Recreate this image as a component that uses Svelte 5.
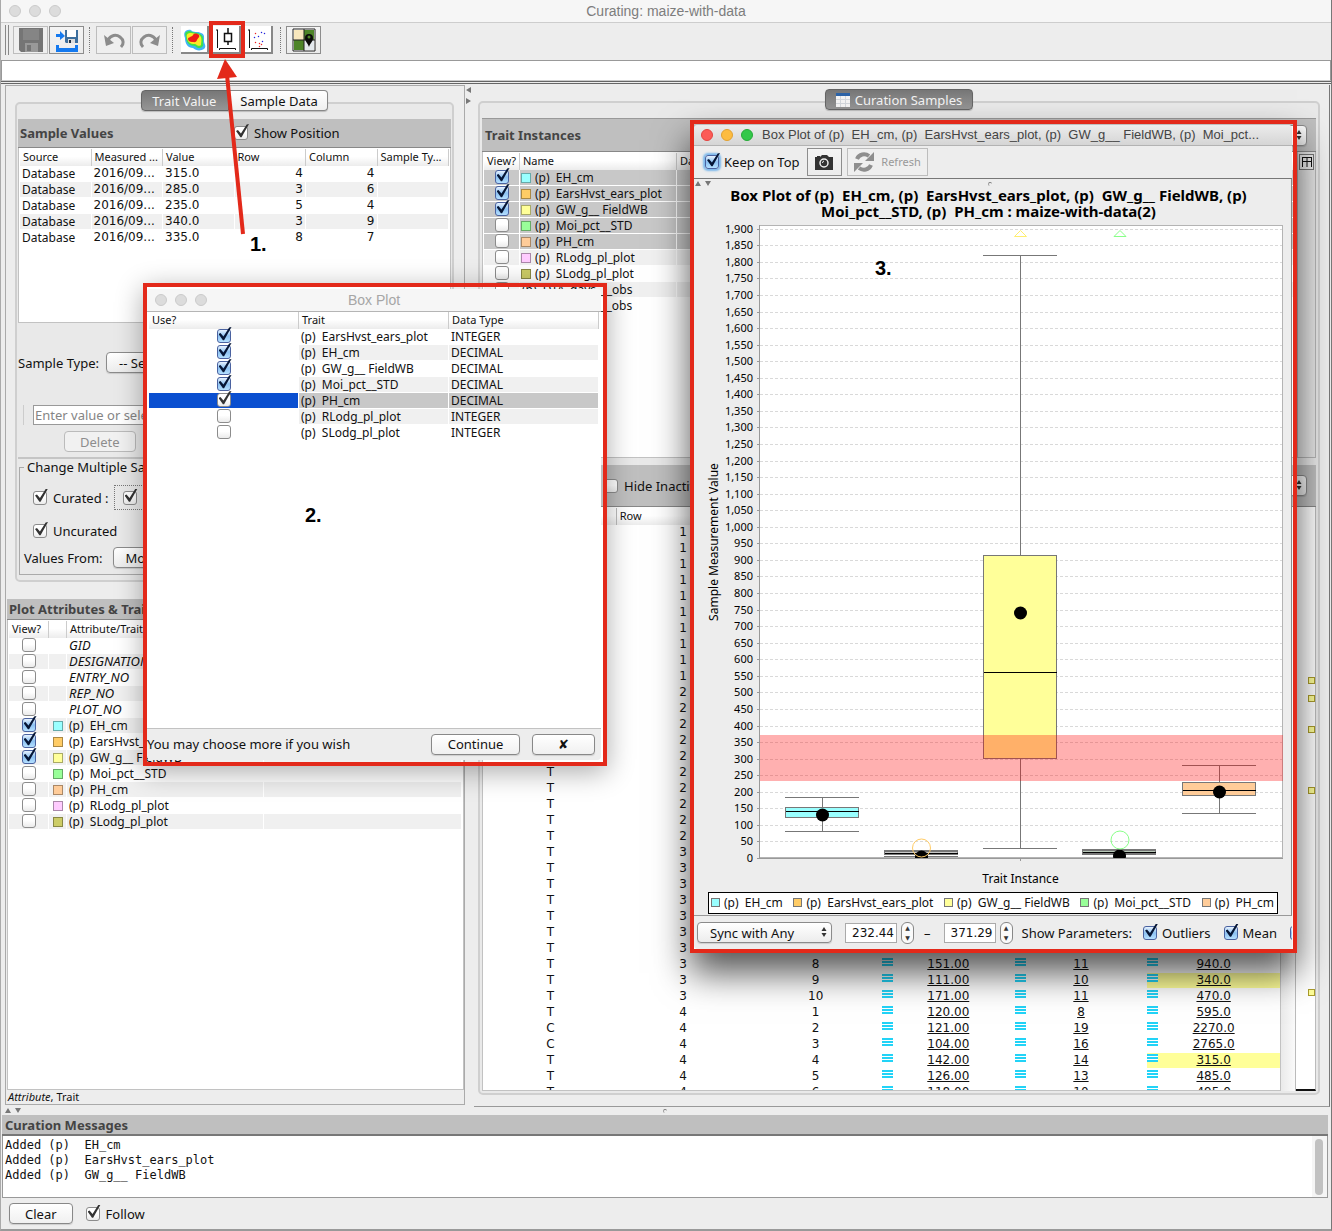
<script>
  const samples = [
    ['315.0', 4, 4],
    ['285.0', 3, 6],
    ['235.0', 5, 4],
    ['340.0', 3, 9],
    ['335.0', 8, 7]
  ];

  const traits = [
    { name: 'EH_cm', color: '#99ffff', on: true },
    { name: 'EarsHvst_ears_plot', color: '#ffcc66', on: true },
    { name: 'GW_g__ FieldWB', color: '#ffff99', on: true },
    { name: 'Moi_pct__STD', color: '#99ff99', on: false },
    { name: 'PH_cm', color: '#ffcc99', on: false },
    { name: 'RLodg_pl_plot', color: '#ffccff', on: false },
    { name: 'SLodg_pl_plot', color: '#cccc66', on: false }
  ];
  const attributes = ['GID', 'DESIGNATION', 'ENTRY_NO', 'REP_NO', 'PLOT_NO'];
  const instances = [...traits, { name: 'DTA_days___obs' }, { name: 'DTS_days___obs' }];

  const choices = [
    ['EarsHvst_ears_plot', 'INTEGER', true],
    ['EH_cm', 'DECIMAL', true],
    ['GW_g__ FieldWB', 'DECIMAL', true],
    ['Moi_pct__STD', 'DECIMAL', true],
    ['PH_cm', 'DECIMAL', true],
    ['RLodg_pl_plot', 'INTEGER', false],
    ['SLodg_pl_plot', 'INTEGER', false]
  ];

  const measured = {
    '3-8': ['T', '151.00', '11', '940.0'],
    '3-9': ['T', '111.00', '10', '340.0'],
    '3-10': ['T', '171.00', '11', '470.0'],
    '4-1': ['T', '120.00', '8', '595.0'],
    '4-2': ['C', '121.00', '19', '2270.0'],
    '4-3': ['C', '104.00', '16', '2765.0'],
    '4-4': ['T', '142.00', '14', '315.0'],
    '4-5': ['T', '126.00', '13', '485.0'],
    '4-6': ['T', '118.00', '10', '495.0']
  };
  const plots = Array.from({ length: 36 }, (_, i) => {
    const row = Math.floor(i / 10) + 1;
    const col = (i % 10) + 1;
    const m = measured[`${row}-${col}`] ?? ['T', '', '', ''];
    return { row, col, kind: m[0], values: m.slice(1) };
  });

  const base = 858;
  const y = (v) => Math.round(base - v * 0.3312);
  const ticks = Array.from({ length: 39 }, (_, i) => i * 50);
  const boxes = [
    { x: 822, lo: 831, hi: 797, q1: 817, q3: 807, med: 811, mean: 815, color: '#99ffff' },
    { x: 921, lo: 856, hi: 850, q1: 854, q3: 851, med: 853, mean: 857, color: '#c8c8c8' },
    { x: 1020, lo: 848, hi: 255, q1: 758, q3: 555, med: 672, mean: 613, color: '#ffff99' },
    { x: 1119, lo: 854, hi: 849, q1: 853, q3: 850, med: 852, mean: 856, color: '#b8c8b8' },
    { x: 1219, lo: 813, hi: 765, q1: 795, q3: 782, med: 790, mean: 792, color: '#ffcc99' }
  ];
  const legend = traits.slice(0, 5);
  const markers = [172, 190, 221, 282, 484];
</script>

{#snippet arrows()}
  <svg class="arrows" viewBox="0 0 8 12" width="8" height="12" aria-hidden="true"><path d="M4 1 6.5 5h-5zM4 11 6.5 7h-5z" /></svg>
{/snippet}

<div class="app">
  <header class="titlebar">
    <span class="lights"><i></i><i></i><i></i></span>
    <h1>Curating: maize-with-data</h1>
  </header>

  <div class="toolbar">
    <span class="grip"></span>
    <div class="group">
      <button class="tool" disabled aria-label="Save">
        <svg width="26" height="26" viewBox="0 0 26 26"><path d="M1 1h24v24H3l-2-2z" fill="#757575" /><path d="M5 2h16v11H5z" fill="#858585" /><path d="M7 16h13v9H7z" fill="#999" /><path d="M9 18h4v6H9z" fill="#757575" /></svg>
      </button>
      <button class="tool dark" aria-label="Save as">
        <svg width="26" height="26" viewBox="0 0 26 26"><path d="M11 3h13v13H12l-1-1z" fill="#3d6f9e" /><path d="M13 3h9v7h-9z" fill="#fff" /><path d="M14 12h7v4h-7z" fill="#ddd" /><path d="M15 13h2v3h-2z" fill="#234" /><path d="M2 7h4V4l5 5-5 4v-3H2zM2 18h3v3h16v-3h3v7H2z" fill="#1479ef" /></svg>
      </button>
    </div>
    <span class="dots"></span>
    <div class="group">
      <button class="tool" disabled aria-label="Undo">
        <svg width="24" height="22" viewBox="0 0 24 22"><path d="M6 11C9 6 14 5 18 8s4 7 1 10" fill="none" stroke="#8c8c8c" stroke-width="3" /><path d="M2 6l2 11 8-3z" fill="#8c8c8c" /></svg>
      </button>
      <button class="tool" disabled aria-label="Redo">
        <svg width="24" height="22" viewBox="0 0 24 22"><path d="M18 11C15 6 10 5 6 8s-4 7-1 10" fill="none" stroke="#8c8c8c" stroke-width="3" /><path d="M22 6l-2 11-8-3z" fill="#8c8c8c" /></svg>
      </button>
    </div>
    <span class="dots roomy"></span>
    <div class="group spaced">
      <button class="tool flat" aria-label="Heat map">
        <svg width="24" height="24" viewBox="0 0 24 24">
          <defs><filter id="soft"><feGaussianBlur stdDeviation="0.6" /></filter></defs>
          <g filter="url(#soft)">
            <path d="M3 11C1 6 3 2 9 3c2 3 7 1 10 3 4 1 3 5 3 8s3 5 0 8c-3 2-8 2-11-1-5 0-8-4-8-10z" fill="#3fb4f5" />
            <path d="M4 10C2 6 4 4 8 4c3 2 7 1 10 3 4 2 3 5 3 8s1 3-1 5-5 1-7-1c-6 0-9-4-9-9z" fill="#3fe04a" />
            <path d="M5 11C4 7 6 6 9 6c4 1 8 0 10 4 1 3 0 6 0 8-2 2-4 0-6-1-5 0-7-2-8-6z" fill="#fbe928" />
            <path d="M6 12c0-2 4-2 5-4s4-2 6 0c1 2-1 3-2 5-1 3-3 2-5 2s-4-1-4-3z" fill="#ee1f14" />
          </g>
        </svg>
      </button>
      <button class="tool flat" aria-label="Box plot">
        <svg width="24" height="24" viewBox="0 0 24 24" fill="none" stroke="#111"><path d="M2 3h2M3.500 3v18M5.500 23v-1.500h16V23" /><path d="M10.500 6.500h7v8h-7zM14 1v6M14 14v4" stroke-width="1.500" /></svg>
      </button>
      <button class="tool flat" aria-label="Scatter plot">
        <svg width="24" height="24" viewBox="0 0 24 24"><path d="M2 3h2M3.500 3v18M5.500 23v-1.500h16V23" fill="none" stroke="#111" /><path d="M9 6h1v1H9zM9 15h1v1H9zM13 19h1v1h-1zM13 16h1v1h-1zM15 17h1v1h-1z" fill="#e22" stroke="#e22" stroke-width=".3" /><path d="M15 5h1v1h-1zM18 6h1v1h-1zM12 9h1v1h-1zM8 10h1v1H8zM16 14h1v1h-1z" fill="#22d" stroke="#22d" stroke-width=".3" /></svg>
      </button>
    </div>
    <span class="dots"></span>
    <button class="tool dark" aria-label="Field map">
      <svg width="24" height="24" viewBox="0 0 24 24"><path d="M1 1h22v22H1z" fill="#fff" stroke="#222" /><path d="M2 2h10v10H2z" fill="#f8e7bd" /><path d="M12 2h10v10H12zM2 12h10v10H2z" fill="#4d8428" /><path d="M12 12h10v10H12z" fill="#e4e9ee" /><path d="M12 1v22M1 12h22" stroke="#222" /><path d="M17 19c-1-4-4-5-4-9a4 4 0 0 1 8 0c0 4-3 5-4 9z" fill="#0a0a0a" /><circle cx="17" cy="9" r="1.500" fill="#4d8428" /></svg>
    </button>
  </div>
  <input class="address" type="text" aria-label="Status" />

  <main>
    <section class="left">
      <div class="tabs">
        <button class="tab active">Trait Value</button><button class="tab">Sample Data</button>
      </div>
      <div class="pane">
        <div class="band first">
          <h2>Sample Values</h2>
          <label class="check"><input type="checkbox" checked />Show Position</label>
        </div>
        <div class="list samples">
          <table class="zebra">
            <thead><tr><th>Source</th><th>Measured ...</th><th>Value</th><th>Row</th><th>Column</th><th>Sample Ty...</th></tr></thead>
            <tbody>
              {#each samples as [value, row, col]}
                <tr><td>Database</td><td class="num">2016/09...</td><td class="num">{value}</td><td class="num end">{row}</td><td class="num end">{col}</td><td></td></tr>
              {/each}
            </tbody>
          </table>
        </div>
        <div class="line type">
          <label for="stype">Sample Type:</label>
          <span class="select"><select id="stype"><option>-- Select --</option></select>{@render arrows()}</span>
        </div>
        <div class="entry"><input type="text" placeholder="Enter value or select" aria-label="Value" /></div>
        <div class="line del"><button class="btn" disabled>Delete</button></div>
        <fieldset>
          <legend>Change Multiple Samples</legend>
          <div class="line curated">
            <label class="check"><input type="checkbox" checked />Curated&nbsp;:</label>
            <span class="dotbox"><input type="checkbox" checked aria-label="Curated values" /></span>
          </div>
          <label class="check uncurated"><input type="checkbox" checked />Uncurated</label>
          <div class="line from">
            <label for="vfrom">Values From:</label>
            <span class="select"><select id="vfrom"><option>Mode</option></select>{@render arrows()}</span>
          </div>
        </fieldset>
      </div>

      <div class="attrs">
        <div class="band slim"><h2>Plot Attributes &amp; Traits</h2></div>
        <div class="list grow">
          <table class="zebra">
            <colgroup><col class="c40" /><col class="c18" /><col class="c197" /><col /></colgroup>
            <thead><tr><th>View?</th><th></th><th>Attribute/Trait</th><th></th></tr></thead>
            <tbody>
              {#each attributes as a}
                <tr><td class="mid"><input type="checkbox" aria-label={a} /></td><td></td><td><em>{a}</em></td><td></td></tr>
              {/each}
              {#each traits as t}
                <tr>
                  <td class="mid"><input class="blue" type="checkbox" checked={t.on} aria-label={t.name} /></td>
                  <td class="mid"><i class="swatch" style:background={t.color}></i></td>
                  <td>(p)&nbsp; {t.name}</td><td></td>
                </tr>
              {/each}
            </tbody>
          </table>
        </div>
        <p class="key"><em>Attribute</em>, Trait</p>
      </div>
    </section>

    <div class="divider">
      <svg width="8" height="22" viewBox="0 0 8 22" aria-hidden="true"><path d="M6 2v6L1 5zM1 13v6l5-3z" fill="#777" /></svg>
    </div>

    <section class="right">
      <div class="tabs">
        <button class="tab active only">
          <svg width="14" height="14" viewBox="0 0 14 14" aria-hidden="true"><path d="M0 0h14v14H0z" fill="#f4f4f4" /><path d="M0 0h14v3H0z" fill="#2d64a8" /><path d="M0 6.500h14M0 10.500h14M4.500 3v11M9.500 3v11" stroke="#d3d7dc" /></svg>
          Curation Samples
        </button>
      </div>
      <div class="pane big">
        <div class="band tall">
          <h2>Trait Instances</h2>
          <span class="select"><select aria-label="Trait order"><option>Any</option></select>{@render arrows()}</span>
        </div>
        <div class="split instances">
          <div class="list">
            <table class="zebra">
              <colgroup><col class="c35" /><col class="c158" /><col /></colgroup>
              <thead><tr><th>View?</th><th>Name</th><th>Data Type</th></tr></thead>
              <tbody>
                {#each instances as t, i}
                  <tr class:sel={i < 5}>
                    <td class="mid"><input class="blue" type="checkbox" checked={t.on} aria-label={t.name} /></td>
                    <td>{#if t.color}<i class="swatch lead" style:background={t.color}></i>{/if}(p)&nbsp; {t.name}</td>
                    <td></td>
                  </tr>
                {/each}
              </tbody>
            </table>
          </div>
          <div class="rail">
            <button aria-label="Choose columns"><svg width="10" height="10" viewBox="0 0 10 10" fill="none" stroke="#111"><path d="M0 .5h10M.5 0v10M5 0v10M9.500 0v10M0 4.500h10" /></svg></button>
          </div>
        </div>
        <div class="band hide">
          <label class="check"><input type="checkbox" />Hide Inactive</label>
          <span class="select"><select aria-label="Plot order"><option>Any</option></select>{@render arrows()}</span>
        </div>
        <div class="split grow">
          <div class="list">
            <table class="plots">
              <thead><tr><th></th><th>Row</th><th>Column</th><th></th><th></th><th></th></tr></thead>
              <tbody>
                {#each plots as p}
                  <tr>
                    <td>{p.kind}</td><td>{p.row}</td><td>{p.col}</td>
                    {#each p.values as v, k}
                      <td class:hot={k === 2 && (v === '340.0' || v === '315.0')}>{#if v}<i class="bars"></i><u>{v}</u>{/if}</td>
                    {/each}
                  </tr>
                {/each}
              </tbody>
            </table>
          </div>
          <div class="scroll"></div>
          <div class="map">
            {#each markers as m}<i style:top="{m - 2}px"></i>{/each}
          </div>
        </div>
      </div>
    </section>
  </main>

  <div class="hsplit">
    <svg width="18" height="7" viewBox="0 0 18 7" aria-hidden="true"><path d="M1 6h6L4 1zM11 1h6l-3 5z" fill="#777" /></svg>
    <span></span>
  </div>

  <section class="messages">
    <div class="band msg"><h2>Curation Messages</h2></div>
    <div class="log">
      <pre>Added (p)  EH_cm
Added (p)  EarsHvst_ears_plot
Added (p)  GW_g__ FieldWB</pre>
      <div class="track"><i></i></div>
    </div>
    <footer>
      <button class="btn">Clear</button>
      <label class="check"><input type="checkbox" checked />Follow</label>
    </footer>
  </section>

  <div class="frame chooser">
    <div class="window">
      <div class="titlebar small">
        <span class="lights"><i></i><i></i><i></i></span>
        <h1>Box Plot</h1>
      </div>
      <div class="body">
        <table class="choices">
          <thead><tr><th>Use?</th><th>Trait</th><th>Data Type</th></tr></thead>
          <tbody>
            {#each choices as [name, kind, on], i}
              <tr class:sel={i === 4}>
                <td class="mid"><input class:blue={i !== 4} type="checkbox" checked={on} aria-label={name} /></td>
                <td>(p)&nbsp; {name}</td><td>{kind}</td>
              </tr>
            {/each}
          </tbody>
        </table>
      </div>
      <div class="foot">
        <span>You may choose more if you wish</span>
        <button class="btn wide">Continue</button>
        <button class="btn close" aria-label="Cancel">✘</button>
      </div>
    </div>
  </div>

  <div class="frame plot">
    <div class="window">
      <div class="titlebar live">
        <span class="lights"><i></i><i></i><i></i></span>
        <h1>Box Plot of (p)&nbsp; EH_cm, (p)&nbsp; EarsHvst_ears_plot, (p)&nbsp; GW_g__ FieldWB, (p)&nbsp; Moi_pct...</h1>
      </div>
      <div class="plotbar">
        <label class="check glow"><input class="blue" type="checkbox" checked />Keep on Top</label>
        <button class="tool dark" aria-label="Snapshot">
          <svg width="18" height="15" viewBox="0 0 18 15"><path d="M0 2h2V1h3v1l2-2h5l2 2h4v13H0z" fill="#333" /><circle cx="9" cy="8" r="4" fill="none" stroke="#eee" stroke-width="1.500" /><path d="M7.500 8A2 2 0 0 1 9 6" stroke="#eee" fill="none" /></svg>
        </button>
        <button class="tool refresh" disabled>
          <svg width="22" height="22" viewBox="0 0 22 22" fill="none" stroke="#8e8e8e" stroke-width="4"><path d="M4 8c2-5 8-6 12-3" /><path d="M18 14c-2 5-8 6-12 3" /><path d="M21 1v9h-9zM1 21v-9h9z" fill="#8e8e8e" stroke="none" /></svg>
          Refresh
        </button>
      </div>
      <div class="chart">
        <div class="mini">
          <svg width="18" height="7" viewBox="0 0 18 7" aria-hidden="true"><path d="M1 6h6L4 1zM11 1h6l-3 5z" fill="#777" /></svg>
          <span></span>
        </div>
        <h3>Box Plot of (p)&nbsp; EH_cm, (p)&nbsp; EarsHvst_ears_plot, (p)&nbsp; GW_g__ FieldWB, (p)<br />Moi_pct__STD, (p)&nbsp; PH_cm : maize-with-data(2)</h3>
        <svg class="graph" viewBox="694 221 597 669" role="img" aria-label="Box plot of sample measurement values by trait instance">
          <defs><clipPath id="area"><rect x="759" y="225" width="524" height="633" /></clipPath></defs>
          <rect x="759.5" y="225.5" width="523" height="632" fill="#fff" stroke="#b4b4b4" />
          {#each ticks as t}
            <path d="M760 {y(t) + 0.5}H1282" stroke="#d9d9d9" stroke-dasharray="3 2" />
            <path d="M757 {y(t) + 0.5}h3" stroke="#999" />
            <text class="tick" x="753" y={y(t) + 4}>{t.toLocaleString('en-US')}</text>
          {/each}
          <path d="M759.5 225v633M757 858.500H1283M1020.500 858v3" stroke="#999" fill="none" />
          <g clip-path="url(#area)">
            {#each boxes as b}
              <g stroke="#777" fill="none">
                <path d="M{b.x + 0.5} {b.hi}V{b.q3}M{b.x + 0.5} {b.q1}V{b.lo}M{b.x - 37} {b.hi + 0.5}h74M{b.x - 37} {b.lo + 0.5}h74" />
                <rect x={b.x - 36.5} y={b.q3 + 0.5} width="73" height={b.q1 - b.q3} fill={b.color} />
                <path d="M{b.x - 36} {b.med + 0.5}h73" stroke="#000" />
              </g>
              <circle cx={b.x + 0.5} cy={b.mean} r="6.500" />
            {/each}
            <circle cx="921.5" cy="848" r="9" fill="none" stroke="#ffcc66" />
            <circle cx="1120" cy="840" r="9" fill="none" stroke="#8f8" />
            <path d="M1014.500 236.500h12l-6-6z" fill="none" stroke="#ffee70" />
            <path d="M1114 236.500h12l-6-6z" fill="none" stroke="#8f8" />
            <rect x="760" y="735" width="523" height="46" fill="#f00" fill-opacity=".31" />
          </g>
          <text class="axis" x="1020.500" y="883">Trait Instance</text>
          <text class="axis" transform="translate(718 542) rotate(-90)">Sample Measurement Value</text>
        </svg>
        <div class="legend">
          {#each legend as t}<span><i style:background={t.color}></i>(p)&nbsp; {t.name}</span>{/each}
        </div>
      </div>
      <div class="params">
        <span class="select sync"><select aria-label="Sync"><option>Sync with Any</option></select>{@render arrows()}</span>
        <input class="field" type="text" value="232.44" aria-label="Lower limit" />
        <span class="spin"><button aria-label="Raise lower limit">▲</button><button aria-label="Reduce lower limit">▼</button></span>
        <span class="dash">–</span>
        <input class="field" type="text" value="371.29" aria-label="Upper limit" />
        <span class="spin"><button aria-label="Raise upper limit">▲</button><button aria-label="Reduce upper limit">▼</button></span>
        <span class="show">Show Parameters:</span>
        <label class="check"><input class="blue" type="checkbox" checked />Outliers</label>
        <label class="check"><input class="blue" type="checkbox" checked />Mean</label>
        <input class="blue" type="checkbox" checked aria-label="Median" />
      </div>
    </div>
  </div>

  <div class="callout"></div>
  <svg class="arrow" width="34" height="178" viewBox="0 0 34 178" aria-hidden="true"><path d="M11 16 27 175" stroke="#e3291a" stroke-width="4" /><path d="M9 0 21 18 1 20z" fill="#e3291a" /></svg>
  <b class="step one">1.</b>
  <b class="step two">2.</b>
  <b class="step three">3.</b>
</div>

<style>
  :global(body) { background: #ededed; }
  .app {
    position: relative;
    box-sizing: border-box;
    height: 100vh;
    min-height: 1000px;
    display: flex;
    flex-direction: column;
    overflow: hidden;
    background: #ededed;
    border-left: 1px solid #aaa;
    border-right: 1px solid #777;
    border-bottom: 2px solid #999;
    font: 13px/16px 'Lucida Grande', 'Noto Sans', sans-serif;
    color: #111;
  }
  .app *, .app *::before, .app *::after { box-sizing: border-box; }
  button, input, select { font: inherit; color: inherit; margin: 0; }
  h1, h2, h3, p, pre { margin: 0; }

  .titlebar {
    flex: none;
    display: grid;
    grid-template-columns: 60px 1fr 60px;
    align-items: center;
    height: 23px;
    background: #f6f6f6;
    border-bottom: 1px solid #cdcdcd;
  }
  .titlebar h1 { font: 14px/18px 'Liberation Sans', sans-serif; color: #7d7d7d; text-align: center; white-space: nowrap; }
  .lights { display: flex; gap: 8px; padding-left: 8px; }
  .lights i { width: 12px; height: 12px; border-radius: 50%; background: #dcdcdc; border: 1px solid #cbcbcb; }

  .toolbar { flex: none; display: flex; align-items: center; height: 37px; padding: 0 4px 3px; }
  .grip { width: 4px; height: 30px; border: solid #888; border-width: 0 1px; margin-right: 4px; }
  .group { display: flex; gap: 1px; }
  .group.spaced { gap: 4px; }
  .dots { height: 26px; border-left: 1px dotted #777; margin: 0 6px 0 5px; }
  .dots.roomy { margin-right: 8px; }
  .spaced + .dots { margin: 0 5px 0 7px; }
  .tool {
    display: flex; align-items: center; justify-content: center; flex: none;
    width: 35px; height: 28px; padding: 0;
    background: #efefef; border: 1px solid #bdbdbd;
  }
  .tool.dark { border-color: #8d8d8d; background: linear-gradient(#f4f4f4, #ebebeb); }
  .tool.flat { width: 28px; background: #fff; border: solid #888; border-width: 0 2px 2px 0; }
  .address {
    flex: none; width: 100%; height: 21px; padding: 0 4px;
    background: #fff; border: 1px solid #999; border-bottom-color: #ccc;
  }

  main { flex: 1; min-height: 0; display: flex; border-top: 3px double #666; padding-top: 1px; }
  .left {
    flex: none; width: 460px; margin: 0 0 2px 4px; display: flex; flex-direction: column;
    border: 1px solid #aaa; padding: 4px 0 0 1px; min-height: 0;
  }
  .right {
    flex: 1; min-width: 0; display: flex; flex-direction: column;
    padding: 4px 9px 11px 4px; border-right: 1px solid #777; margin-right: 1px; border-bottom: 1px solid #999;
  }
  .divider { flex: none; width: 9px; }
  .divider svg { display: block; }

  .tabs { flex: none; position: relative; display: flex; justify-content: center; }
  .tab {
    height: 21px; padding: 0 9px 0 11px; white-space: nowrap;
    border: 1px solid #888; border-radius: 0 4px 4px 0; border-left: 0;
    background: linear-gradient(#fff, #f0f0f0); box-shadow: 0 1px 1px #0003;
  }
  .left .tabs { padding-right: 2px; }
  .tab.active { border: 1px solid #666; border-radius: 4px 0 0 4px; background: linear-gradient(#777, #959595); color: #f3f3f3; padding: 0 12px 0 10px; }
  .tab.only { border-radius: 4px; display: flex; align-items: center; gap: 5px; padding: 0 9px; }
  .tab.active.only { padding: 0 10px; border-radius: 4px; }
  .pane {
    display: flex; flex-direction: column; flex: none;
    margin: -9px 10px 0 8px; padding: 15px 1px 5px;
    border: 2px solid #cfcfcf; border-radius: 5px; background: #e9e9e9;
  }
  .pane.big { flex: 1; min-height: 0; margin: -9px 0 0; padding: 15px 2px 2px; }

  .band { flex: none; display: flex; align-items: center; background: #bfbfbf; border-bottom: 1px solid #888; white-space: nowrap; }
  h2 { font-size: 13px; line-height: 16px; color: #444; }
  .band.first { height: 29px; padding-left: 2px; }
  .band.first h2 { width: 214px; }
  .band.slim { height: 21px; padding-left: 2px; }
  .band.tall { height: 34px; padding: 0 9px 0 3px; justify-content: space-between; border-top: 1px solid #999; }
  .band.hide { height: 42px; margin-top: 7px; padding: 0 9px 0 122px; justify-content: space-between; }
  .band.msg { height: 21px; padding-left: 3px; border-bottom: 2px solid #777; }

  .list { background: #fff; border: 1px solid #c2c2c2; border-top: 0; overflow: hidden; padding: 1px 1px 0; }
  .samples { height: 175px; }
  .grow { flex: 1; min-height: 0; }
  table { width: 100%; table-layout: fixed; border-collapse: separate; border-spacing: 0; font-size: 12px; line-height: 15px; }
  th {
    height: 17px; padding: 0 2px 2px 3px; font-size: 11px; line-height: 15px; font-weight: 400; text-align: left;
    white-space: nowrap; overflow: hidden; background: linear-gradient(#fff 45%, #ececec);
    border-right: 1px solid #ccc;
  }
  td { height: 16px; padding: 0 2px; white-space: nowrap; border: solid #fff; border-width: 0 1px 1px 0; }
  td em { font-size: 13px; line-height: 14px; }
  .zebra tbody tr:nth-child(even) td { background: #f0f0f0; }
  .zebra tbody tr.sel:nth-child(n) td { background: #c8c8c8; }
  .num, .plots td, .field { font-family: 'DejaVu Sans', sans-serif; }
  .end { text-align: right; }
  .mid { text-align: center; padding: 0; }
  .c40 { width: 40px; } .c18 { width: 18px; } .c197 { width: 197px; } .c35 { width: 36px; } .c158 { width: 157px; }
  .swatch { display: inline-block; vertical-align: -1px; width: 10px; height: 10px; border: 1px solid #0005; }
  .swatch.lead { margin-right: 4px; margin-left: -1px; }

  input[type='checkbox'] {
    appearance: none; position: relative; flex: none; display: inline-block; vertical-align: top;
    width: 14px; height: 14px; border: 1px solid #8c8c8c; border-radius: 3px;
    background: linear-gradient(#fff 45%, #ebebeb);
  }
  input[type='checkbox']:checked::after {
    content: ''; position: absolute; left: 1px; top: -3px; width: 13px; height: 14px; background: #333;
    clip-path: polygon(0 50%, 15% 42%, 38% 68%, 82% 4%, 100% 0, 43% 94%, 34% 94%);
  }
  input[type='checkbox'].blue:checked { background: linear-gradient(#e8f3ff, #8cc1f2 50%, #b5e0ff); border-color: #4a62a0; }
  input[type='checkbox'].blue:checked::after { background: #061636; }
  .check { display: flex; align-items: center; gap: 6px; white-space: nowrap; }

  .line { display: flex; align-items: center; white-space: nowrap; }
  .type { margin-top: 29px; gap: 7px; }
  .select { position: relative; display: flex; height: 21px; }
  .select select {
    appearance: none; width: 100%; padding: 0 28px 0 12px; line-height: 16px;
    border: 1px solid #8b8b8b; border-radius: 4px; background: linear-gradient(#fff, #ececec);
    box-shadow: 0 1px 1px #0002;
  }
  .arrows { position: absolute; right: 4px; top: 4px; pointer-events: none; fill: #333; }
  .entry { margin: 32px 0 0 5px; padding: 0 9px; border-left: 1px solid #ccc; }
  .entry input { display: block; width: 200px; height: 20px; padding: 0 1px; border: 1px solid #999; background: #fff; }
  .entry input::placeholder { color: #858585; opacity: 1; }
  .del { padding: 6px 0 5px 46px; border-bottom: 2px solid #c5c5c5; }
  .btn {
    height: 21px; padding: 0 15px; border: 1px solid #888; border-radius: 4px; line-height: 16px;
    background: linear-gradient(#fff, #f0f0f0); box-shadow: 0 1px 1px #0002;
  }
  .btn:disabled { color: #8d8d8d; border-color: #bbb; background: #f1f1f1; box-shadow: none; }
  fieldset { margin: 0 1px; padding: 10px 4px 6px 4px; border: 1px solid #aaa; min-width: 0; }
  legend { padding: 0 3px; line-height: 16px; }
  .curated { padding-left: 9px; gap: 5px; }
  .dotbox { display: flex; align-items: center; height: 25px; width: 180px; padding-left: 8px; border: 1px dotted #777; }
  .uncurated { padding: 13px 0 8px 9px; }
  .from { gap: 10px; }

  .attrs { flex: 1; min-height: 0; display: flex; flex-direction: column; margin-top: 17px; }
  .key { flex: none; font-size: 11px; line-height: 14px; padding-left: 1px; }

  .split { display: flex; min-height: 0; }
  .split .list { flex: 1; min-width: 0; padding: 1px 0 0 1px; }
  .instances { height: 306px; }
  .rail { flex: none; width: 19px; background: #e6e6e6; border: 1px solid #b5b5b5; border-top: 0; margin-left: 2px; }
  .rail button { display: grid; place-items: center; width: 15px; height: 16px; padding: 0; margin: 2px 0 0 1px; border: 1px solid #777; background: #eee; }
  .scroll { flex: none; width: 15px; background: linear-gradient(90deg, #eaeaea, #fafafa); border-right: 1px solid #bbb; }
  .map { position: relative; flex: none; width: 20px; background: #fff; border-right: 1px solid #bbb; border-bottom: 2px solid #111; }
  .map i { position: absolute; right: 0; width: 7px; height: 7px; border: 1px solid #aa9c2c; background: #ffff99; }
  .plots th { border-right-color: #bbb; }
  .plots td { position: relative; text-align: center; border-right: 0; }
  .hot { background: #ffff99; }
  .bars { position: absolute; left: 0; top: 1px; width: 11px; height: 8px; background: repeating-linear-gradient(#22d3f7 0 2px, #fff 2px 3px); }

  .hsplit { flex: none; display: grid; grid-template-columns: 1fr 1fr; height: 8px; padding-left: 3px; }
  .hsplit svg, .mini svg { display: block; }
  .hsplit span, .mini span { width: 4px; height: 4px; margin: 2px 0 0 -5px; border-top: 1px solid #777; border-left: 1px solid #999; border-radius: 50%; }
  .messages { flex: none; margin: 0 3px 0 1px; }
  .log { display: flex; height: 62px; background: #fff; border: 1px solid #999; border-top: 0; }
  .log pre { flex: 1; padding: 2px; font: 12px/15px 'DejaVu Sans Mono', monospace; }
  .track { width: 15px; background: #f5f5f5; padding: 3px; }
  .track i { display: block; height: 56px; width: 8px; border-radius: 4px; background: #c1c1c1; }
  footer { display: flex; align-items: center; gap: 13px; height: 31px; padding-left: 7px; }

  .frame { position: absolute; display: flex; border: 4px solid #e3291a; }
  .window { flex: 1; min-width: 0; display: flex; flex-direction: column; background: #ededed; border-radius: 4px; overflow: hidden; }
  .chooser { left: 142px; top: 283px; width: 464px; height: 483px; padding: 2px 2px 2px 0; box-shadow: 0 6px 26px #0005; }
  .titlebar.small { height: 23px; border-bottom-color: #b5b5b5; }
  .titlebar.small h1 { color: #a6a6a6; }
  .body { flex: 1; background: #fff; padding: 0 2px; border-bottom: 1px solid #c2c2c2; }
  .choices tbody tr:nth-child(even) td + td { background: #f0f0f0; }
  .choices tbody tr.sel td + td { background: #c8c8c8; }
  .choices tbody tr.sel td:first-child { background: #0a4fd0; }
  .foot { flex: none; display: flex; align-items: center; height: 31px; padding: 0 6px 1px 0; white-space: nowrap; }
  .foot span { flex: 1; }
  .wide { width: 89px; }
  .close { width: 63px; margin-left: 12px; }

  .plot { left: 689px; top: 120px; width: 607px; height: 833px; padding: 1px 1px 0 0; box-shadow: 0 20px 34px #000a; }
  .titlebar.live { grid-template-columns: 68px 1fr; height: 21px; background: linear-gradient(#ececec, #d5d5d5); border-bottom-color: #b3b3b3; }
  .titlebar.live h1 { text-align: left; color: #444; font-size: 13px; }
  .live .lights { padding-left: 7px; }
  .live .lights i { background: #fc5b57; border-color: #e2443f; }
  .live .lights i:nth-child(2) { background: #fdbc40; border-color: #e0a032; }
  .live .lights i:nth-child(3) { background: #34c84a; border-color: #25a937; }
  .plotbar { flex: none; display: flex; align-items: center; gap: 5px; height: 33px; padding: 0 11px; border-bottom: 1px solid #777; }
  .glow { margin-right: 2px; }
  .glow input { box-shadow: 0 0 2px 2px #7db9ec; }
  .plotbar .check { gap: 5px; }
  .refresh { width: 81px; gap: 6px; font-size: 11px; color: #999; }
  .chart { flex: 1; min-height: 0; display: flex; flex-direction: column; border-right: 1px solid #888; border-bottom: 1px solid #999; }
  .mini { display: grid; grid-template-columns: 1fr 1fr; height: 8px; padding-top: 1px; }
  h3 { font-size: 15px; line-height: 16px; text-align: center; color: #000; white-space: nowrap; padding-right: 8px; }
  .graph { flex: none; display: block; width: 100%; height: auto; margin-top: 2px; }
  .tick { font-size: 11px; text-anchor: end; }
  .axis { font-size: 12px; text-anchor: middle; }
  .legend {
    display: flex; justify-content: space-between; margin: 2px 13px 0 14px; height: 22px; padding: 0 3px 0 2px; flex: none;
    align-items: center; background: #fff; border: 1px solid #000; font-size: 12px; white-space: nowrap;
  }
  .legend i { display: inline-block; width: 9px; height: 9px; margin-right: 4px; border: 1px solid #777; }
  .params { flex: none; display: flex; align-items: center; height: 33px; padding-left: 3px; white-space: nowrap; overflow: hidden; }
  .sync { width: 135px; flex: none; }
  .field { width: 52px; height: 20px; padding: 0 2px; margin-left: 13px; border: 1px solid #aaa; background: #fff; text-align: right; font-size: 12px; }
  .spin { display: flex; flex-direction: column; width: 13px; height: 22px; margin-left: 4px; border: 1px solid #888; border-radius: 6px; background: #fafafa; overflow: hidden; }
  .spin button { flex: 1; padding: 0; border: 0; background: none; font: 6px/10px 'DejaVu Sans', sans-serif; color: #333; }
  .dash { padding-left: 10px; width: 17px; }
  .show { margin: 0 11px 0 9px; }
  .params .check { margin-right: 13px; gap: 5px; }
  .spin, .params .check, .show, .params > input { flex: none; }

  .callout { position: absolute; left: 208px; top: 21px; width: 36px; height: 37px; border: 4px solid #e3291a; }
  .arrow { position: absolute; left: 215px; top: 59px; }
  .step { position: absolute; font: bold 20px/22px 'Liberation Sans', sans-serif; color: #000; }
  .one { left: 249px; top: 233px; }
  .two { left: 304px; top: 504px; }
  .three { left: 874px; top: 257px; }
</style>
